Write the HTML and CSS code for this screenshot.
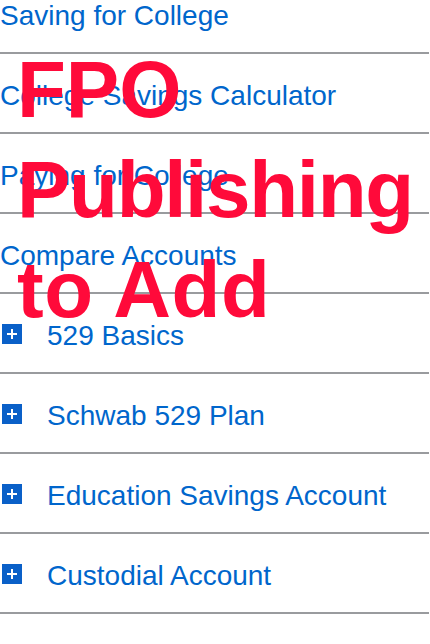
FILE: index.html
```html
<!DOCTYPE html>
<html lang="en">
<head>
    <meta charset="UTF-8">
    <meta name="viewport" content="width=device-width, initial-scale=1.0">
    <title>College Savings</title>
    <link rel="stylesheet" href="styles.css">
</head>
<body>
    <div class="page">
        <ul class="nav-list">
            <li class="nav-item"><a href="#">Saving for College</a></li>
            <li class="nav-item"><a href="#">College Savings Calculator</a></li>
            <li class="nav-item"><a href="#">Paying for College</a></li>
            <li class="nav-item"><a href="#">Compare Accounts</a></li>
            <li class="nav-item expandable"><span class="plus"></span><a href="#">529 Basics</a></li>
            <li class="nav-item expandable"><span class="plus"></span><a href="#">Schwab 529 Plan</a></li>
            <li class="nav-item expandable"><span class="plus"></span><a href="#">Education Savings Account</a></li>
            <li class="nav-item expandable"><span class="plus"></span><a href="#">Custodial Account</a></li>
        </ul>

        <div class="fpo">
            <span class="fpo-line">FPO</span>
            <span class="fpo-line tight">Publishing</span>
            <span class="fpo-line wide">to Add</span>
        </div>
    </div>
</body>
</html>
```

FILE: styles.css
```css
:root {
    --link-color: #0066cc;
    --icon-color: #0a60c8;
    --rule-color: #999b9e;
    --fpo-color: #ff0a3a;
}

body {
    margin: 0;
    padding: 0;
    font-family: "Liberation Sans", Arial, sans-serif;
    background-color: #ffffff;
}

.page {
    position: relative;
}

.nav-list {
    list-style: none;
    margin: 0;
    padding: 0 1px 0 0;
}

.nav-item {
    display: flex;
    align-items: center;
    padding: 28px 0 22px;
    border-bottom: 2px solid var(--rule-color);
    font-size: 28px;
    line-height: 28px;
}

.nav-item:first-child {
    padding-top: 2px;
}

.nav-item a {
    color: var(--link-color);
    text-decoration: none;
}

.plus {
    position: relative;
    width: 20px;
    height: 20px;
    margin: 0 25px 4px 2px;
    background-color: var(--icon-color);
}

.plus::before,
.plus::after {
    content: "";
    position: absolute;
    background-color: #ffffff;
}

.plus::before {
    left: 5px;
    top: 9px;
    width: 10px;
    height: 2px;
}

.plus::after {
    left: 9px;
    top: 5px;
    width: 2px;
    height: 10px;
}

/* placeholder stamp over the list */
.fpo {
    position: absolute;
    top: 40px;
    left: 17px;
    color: var(--fpo-color);
    font-size: 80px;
    font-weight: 700;
    line-height: 100px;
    pointer-events: none;
}

.fpo-line {
    display: block;
}

.fpo-line.tight {
    letter-spacing: -1.3px;
}

.fpo-line.wide {
    letter-spacing: 0.5px;
}
```
